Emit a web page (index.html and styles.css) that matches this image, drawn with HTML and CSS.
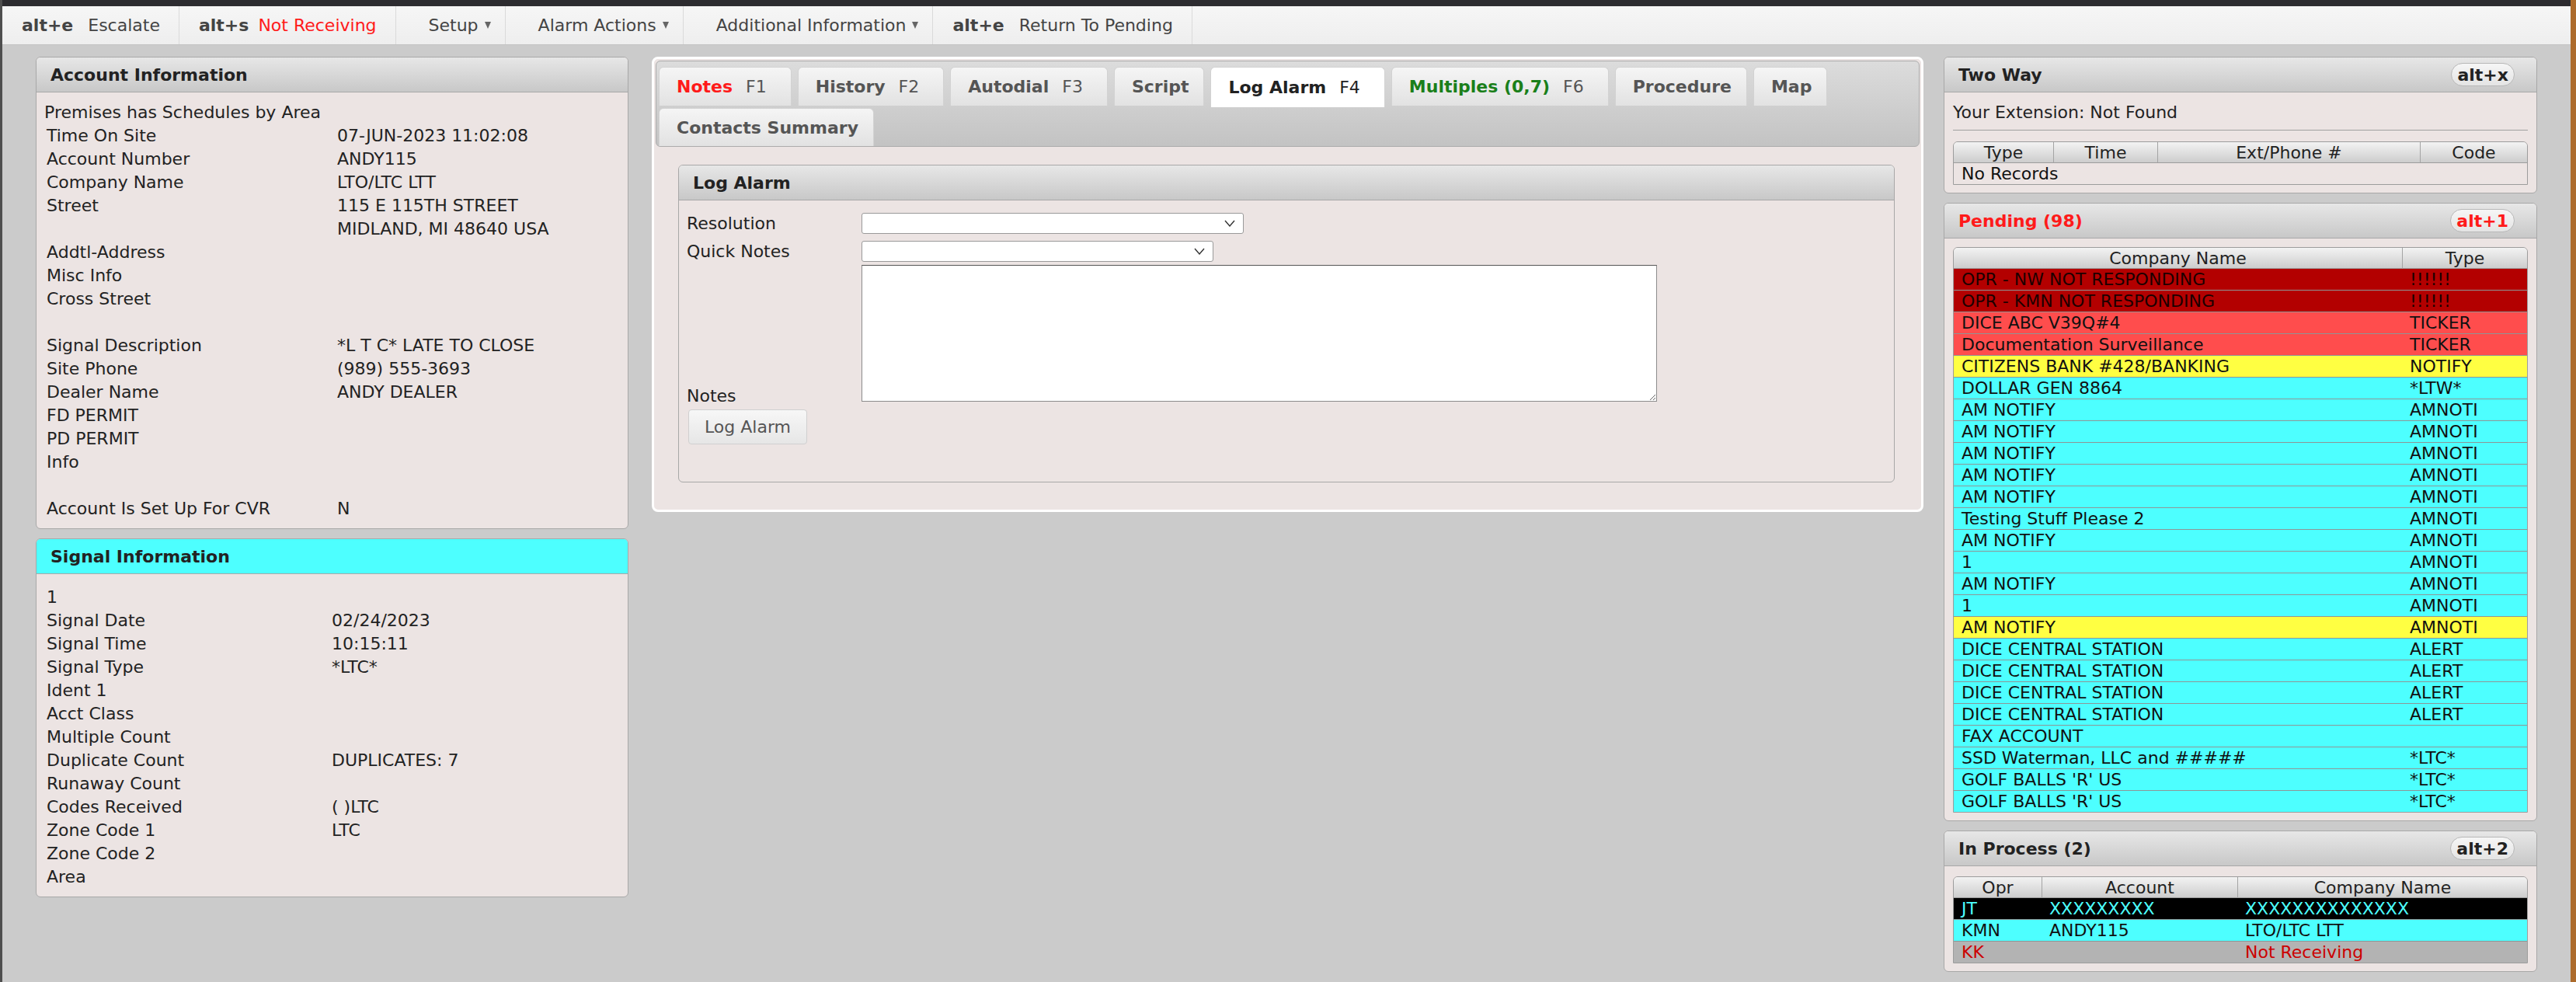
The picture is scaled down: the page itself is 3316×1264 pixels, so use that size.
FILE: index.html
```html
<!DOCTYPE html>
<html lang="en">
<head>
    <meta charset="UTF-8">
    <meta name="viewport" content="width=device-width, initial-scale=1.0">
    <title>Alarm Console</title>
    <link rel="stylesheet" href="styles.css">
</head>
<body>

    <div class="window-bar"></div>

    <div class="toolbar">
        <div class="tool"><b>alt+e</b> Escalate</div>
        <div class="tool"><b>alt+s</b> <span class="red">Not Receiving</span></div>
        <div class="tool menu">Setup<span class="caret"></span></div>
        <div class="tool menu">Alarm Actions<span class="caret"></span></div>
        <div class="tool menu">Additional Information<span class="caret"></span></div>
        <div class="tool"><b>alt+e</b> Return To Pending</div>
    </div>

    <div class="main">

        <!-- left column -->
        <div class="col-left">
            <div class="panel">
                <div class="panel-header">Account Information</div>
                <div class="panel-body">
                    <table class="info account">
                        <tr><td colspan="2" class="premises">Premises has Schedules by Area</td></tr>
                        <tr><td>Time On Site</td><td>07-JUN-2023 11:02:08</td></tr>
                        <tr><td>Account Number</td><td>ANDY115</td></tr>
                        <tr><td>Company Name</td><td>LTO/LTC LTT</td></tr>
                        <tr><td>Street</td><td>115 E 115TH STREET</td></tr>
                        <tr><td></td><td>MIDLAND, MI 48640 USA</td></tr>
                        <tr><td>Addtl-Address</td><td></td></tr>
                        <tr><td>Misc Info</td><td></td></tr>
                        <tr><td>Cross Street</td><td></td></tr>
                        <tr><td></td><td></td></tr>
                        <tr><td>Signal Description</td><td>*L T C* LATE TO CLOSE</td></tr>
                        <tr><td>Site Phone</td><td>(989) 555-3693</td></tr>
                        <tr><td>Dealer Name</td><td>ANDY DEALER</td></tr>
                        <tr><td>FD PERMIT</td><td></td></tr>
                        <tr><td>PD PERMIT</td><td></td></tr>
                        <tr><td>Info</td><td></td></tr>
                        <tr><td></td><td></td></tr>
                        <tr><td>Account Is Set Up For CVR</td><td>N</td></tr>
                    </table>
                </div>
            </div>

            <div class="panel">
                <div class="panel-header cyan">Signal Information</div>
                <div class="panel-body signal-body">
                    <table class="info signal">
                        <tr><td>1</td><td></td></tr>
                        <tr><td>Signal Date</td><td>02/24/2023</td></tr>
                        <tr><td>Signal Time</td><td>10:15:11</td></tr>
                        <tr><td>Signal Type</td><td>*LTC*</td></tr>
                        <tr><td>Ident 1</td><td></td></tr>
                        <tr><td>Acct Class</td><td></td></tr>
                        <tr><td>Multiple Count</td><td></td></tr>
                        <tr><td>Duplicate Count</td><td>DUPLICATES: 7</td></tr>
                        <tr><td>Runaway Count</td><td></td></tr>
                        <tr><td>Codes Received</td><td>( )LTC</td></tr>
                        <tr><td>Zone Code 1</td><td>LTC</td></tr>
                        <tr><td>Zone Code 2</td><td></td></tr>
                        <tr><td>Area</td><td></td></tr>
                    </table>
                </div>
            </div>
        </div>

        <!-- middle column -->
        <div class="col-mid">
            <div class="tabs">
                <ul class="tab-nav">
                    <li><span class="red">Notes</span><span class="fkey">F1</span></li>
                    <li>History<span class="fkey">F2</span></li>
                    <li>Autodial<span class="fkey">F3</span></li>
                    <li>Script</li>
                    <li class="active">Log Alarm<span class="fkey">F4</span></li>
                    <li><span class="green">Multiples (0,7)</span><span class="fkey">F6</span></li>
                    <li>Procedure</li>
                    <li>Map</li>
                    <li class="second">Contacts Summary</li>
                </ul>
                <div class="tab-panel">
                    <div class="panel">
                        <div class="panel-header">Log Alarm</div>
                        <div class="panel-body log-form">
                            <div class="form-row">
                                <label>Resolution</label>
                                <div class="select resolution">
                                    <svg width="14" height="9" viewBox="0 0 14 9"><polyline points="1,1 7,8 13,1" fill="none" stroke="#333" stroke-width="1.4"/></svg>
                                </div>
                            </div>
                            <div class="form-row">
                                <label>Quick Notes</label>
                                <div class="select quick">
                                    <svg width="14" height="9" viewBox="0 0 14 9"><polyline points="1,1 7,8 13,1" fill="none" stroke="#333" stroke-width="1.4"/></svg>
                                </div>
                            </div>
                            <div class="form-row notes-row">
                                <label>Notes</label>
                                <textarea></textarea>
                            </div>
                            <button class="btn">Log Alarm</button>
                        </div>
                    </div>
                </div>
            </div>
        </div>

        <!-- right column -->
        <div class="col-right">
            <div class="panel">
                <div class="panel-header">Two Way <span class="hotkey">alt+x</span></div>
                <div class="panel-body side-body">
                    <div class="extension">Your Extension: Not Found</div>
                    <div class="divider"></div>
                    <div class="grid-wrap">
                        <table class="grid twoway">
                            <tr><th class="c-type">Type</th><th class="c-time">Time</th><th>Ext/Phone #</th><th class="c-code">Code</th></tr>
                            <tr><td colspan="4">No Records</td></tr>
                        </table>
                    </div>
                </div>
            </div>

            <div class="panel">
                <div class="panel-header"><span class="red">Pending (98)</span> <span class="hotkey red">alt+1</span></div>
                <div class="panel-body side-body">
                    <div class="grid-wrap">
                        <table class="grid pending">
                            <tr><th>Company Name</th><th class="c-ptype">Type</th></tr>
                            <tr class="r-dark"><td>OPR - NW NOT RESPONDING</td><td>!!!!!!</td></tr>
                            <tr class="r-dark"><td>OPR - KMN NOT RESPONDING</td><td>!!!!!!</td></tr>
                            <tr class="r-red"><td>DICE ABC V39Q#4</td><td>TICKER</td></tr>
                            <tr class="r-red"><td>Documentation Surveillance</td><td>TICKER</td></tr>
                            <tr class="r-yellow"><td>CITIZENS BANK #428/BANKING</td><td>NOTIFY</td></tr>
                            <tr class="r-cyan"><td>DOLLAR GEN 8864</td><td>*LTW*</td></tr>
                            <tr class="r-cyan"><td>AM NOTIFY</td><td>AMNOTI</td></tr>
                            <tr class="r-cyan"><td>AM NOTIFY</td><td>AMNOTI</td></tr>
                            <tr class="r-cyan"><td>AM NOTIFY</td><td>AMNOTI</td></tr>
                            <tr class="r-cyan"><td>AM NOTIFY</td><td>AMNOTI</td></tr>
                            <tr class="r-cyan"><td>AM NOTIFY</td><td>AMNOTI</td></tr>
                            <tr class="r-cyan"><td>Testing Stuff Please 2</td><td>AMNOTI</td></tr>
                            <tr class="r-cyan"><td>AM NOTIFY</td><td>AMNOTI</td></tr>
                            <tr class="r-cyan"><td>1</td><td>AMNOTI</td></tr>
                            <tr class="r-cyan"><td>AM NOTIFY</td><td>AMNOTI</td></tr>
                            <tr class="r-cyan"><td>1</td><td>AMNOTI</td></tr>
                            <tr class="r-yellow"><td>AM NOTIFY</td><td>AMNOTI</td></tr>
                            <tr class="r-cyan"><td>DICE CENTRAL STATION</td><td>ALERT</td></tr>
                            <tr class="r-cyan"><td>DICE CENTRAL STATION</td><td>ALERT</td></tr>
                            <tr class="r-cyan"><td>DICE CENTRAL STATION</td><td>ALERT</td></tr>
                            <tr class="r-cyan"><td>DICE CENTRAL STATION</td><td>ALERT</td></tr>
                            <tr class="r-cyan"><td>FAX ACCOUNT</td><td></td></tr>
                            <tr class="r-cyan"><td>SSD Waterman, LLC and #####</td><td>*LTC*</td></tr>
                            <tr class="r-cyan"><td>GOLF BALLS 'R' US</td><td>*LTC*</td></tr>
                            <tr class="r-cyan"><td>GOLF BALLS 'R' US</td><td>*LTC*</td></tr>
                        </table>
                    </div>
                </div>
            </div>

            <div class="panel">
                <div class="panel-header">In Process (2) <span class="hotkey">alt+2</span></div>
                <div class="panel-body side-body process-body">
                    <div class="grid-wrap">
                        <table class="grid process">
                            <tr><th class="c-opr">Opr</th><th class="c-acct">Account</th><th>Company Name</th></tr>
                            <tr class="r-black"><td>JT</td><td>XXXXXXXXX</td><td>XXXXXXXXXXXXXX</td></tr>
                            <tr class="r-cyan"><td>KMN</td><td>ANDY115</td><td>LTO/LTC LTT</td></tr>
                            <tr class="r-gray"><td>KK</td><td></td><td>Not Receiving</td></tr>
                        </table>
                    </div>
                </div>
            </div>
        </div>

    </div>

</body>
</html>
```

FILE: styles.css
```css
* {
    margin: 0;
    padding: 0;
    box-sizing: border-box;
}

body {
    font-family: "DejaVu Sans", Verdana, sans-serif;
    font-size: 22px;
    color: #222;
    background: #cbcbcb;
    height: 1264px;
    overflow: hidden;
    border-left: 3px solid #4e4e4e;
    border-right: 7px solid #ad6b2c;
}

.red {
    color: #ff1a1a;
}

.green {
    color: #1a7f1a;
}

.window-bar {
    height: 8px;
    background: #2d2c30;
}

/* top toolbar */
.toolbar {
    display: flex;
    height: 50px;
    background: linear-gradient(#f6f6f6, #eeeeee);
    border-bottom: 1px solid #c3c3c3;
}

.tool {
    display: flex;
    align-items: center;
    padding: 0 24px 0 25px;
    border-right: 1px solid #dadada;
    color: #444;
    white-space: pre;
}

.tool b {
    margin-right: 12px;
}

.tool.menu {
    padding: 0 18px 0 42px;
}

.caret {
    display: inline-block;
    margin-left: 8px;
    border-left: 4px solid transparent;
    border-right: 4px solid transparent;
    border-top: 9px solid #666;
}

/* columns */
.main {
    display: flex;
    align-items: flex-start;
    padding: 15px 0 0 43px;
}

.col-left {
    width: 763px;
    display: flex;
    flex-direction: column;
    gap: 12px;
}

.col-mid {
    width: 1637px;
    margin: 0 26px 0 30px;
}

.col-right {
    width: 764px;
    display: flex;
    flex-direction: column;
    gap: 12px;
}

/* panels */
.panel {
    background: #ece4e3;
    border: 1px solid #a8a8a8;
    border-radius: 6px;
    overflow: hidden;
}

.panel-header {
    height: 45px;
    display: flex;
    align-items: center;
    justify-content: space-between;
    padding: 0 28px 0 18px;
    background: linear-gradient(#e7e7e7, #c8c8c8);
    border-bottom: 1px solid #a8a8a8;
    font-weight: bold;
}

.panel-header.cyan {
    background: #4dffff;
}

.hotkey {
    height: 30px;
    padding: 0 7px;
    display: flex;
    align-items: center;
    border: 1px solid #b8b8b8;
    border-radius: 15px;
    background: linear-gradient(#f6f6f6, #e4e4e4);
}

.panel-body {
    padding: 10px 11px 11px 13px;
}

.signal-body {
    padding-top: 14px;
}

.info {
    border-collapse: collapse;
}

.info td {
    height: 30px;
    padding: 0;
    white-space: nowrap;
}

.account td:first-child {
    width: 374px;
}

.signal td:first-child {
    width: 367px;
}

.info .premises {
    position: relative;
    left: -3px;
}

/* tabs */
.tabs {
    height: 586px;
    background: #ece4e3;
    border: 3px solid #fff;
    border-radius: 8px;
    padding: 2px;
}

.tab-nav {
    list-style: none;
    display: flex;
    flex-wrap: wrap;
    gap: 3px 8px;
    padding: 7px 3px 0;
    background: linear-gradient(#dcdcdc, #c3c3c3);
    border: 1px solid #acacac;
    border-radius: 6px;
}

.tab-nav li {
    height: 50px;
    display: flex;
    align-items: center;
    padding: 0 19px 0 22px;
    background: linear-gradient(#f5f5f5, #e2e2e2);
    border: 1px solid #d2d2d2;
    border-bottom: none;
    border-radius: 6px 6px 0 0;
    font-weight: bold;
    color: #555;
    white-space: nowrap;
}

.tab-nav li.active {
    background: #fff;
    color: #222;
    height: 52px;
    margin-bottom: -2px;
}

.tab-nav li.second {
    height: 49px;
}

.fkey {
    font-weight: normal;
    margin: 0 12px 0 17px;
    color: #555;
}

.tab-nav li.active .fkey {
    color: #222;
}

.tab-panel {
    padding: 23px 32px 0 29px;
}

/* log alarm form */
.log-form {
    height: 362px;
    padding: 16px 10px 0 10px;
}

.form-row {
    display: flex;
    align-items: center;
    margin-bottom: 9px;
}

.form-row label {
    width: 225px;
    flex-shrink: 0;
}

.select {
    height: 27px;
    background: #fff;
    border: 1px solid #9a9a9a;
    border-radius: 3px;
    display: flex;
    align-items: center;
    justify-content: flex-end;
    padding-right: 10px;
}

.select.resolution {
    width: 492px;
}

.select.quick {
    width: 453px;
}

.form-row.notes-row {
    align-items: flex-end;
    margin-top: -5px;
    margin-bottom: 10px;
}

.notes-row label {
    line-height: 30px;
    margin-bottom: -8px;
}

.notes-row textarea {
    width: 1024px;
    height: 176px;
    border: 1px solid #8c8c8c;
    border-top-color: #555;
    background: #fff;
    resize: both;
}

.btn {
    margin-left: 2px;
    width: 153px;
    height: 45px;
    font-family: inherit;
    font-size: 22px;
    color: #555;
    background: linear-gradient(#f7f7f7, #e6e6e6);
    border: 1px solid #d0d0d0;
    border-radius: 4px;
}

/* side tables */
.side-body {
    padding: 11px 11px 10px 11px;
}

.process-body {
    padding-top: 13px;
}

.extension {
    line-height: 30px;
}

.divider {
    height: 1px;
    background: #a0a0a0;
    margin: 7px 0 14px;
}

.grid-wrap {
    border: 1px solid #9c9c9c;
    border-radius: 6px 6px 0 0;
    overflow: hidden;
}

.grid {
    width: 100%;
    border-collapse: separate;
    border-spacing: 0;
    color: #111;
}

.grid th {
    height: 27px;
    font-weight: normal;
    color: #222;
    background: linear-gradient(#f3f3f3, #cdcdcd);
    border-left: 1px solid #a4a4a4;
    border-bottom: 1px solid #9c9c9c;
}

.grid th:first-child {
    border-left: none;
}

.grid td {
    height: 28px;
    padding: 0 10px;
    border-bottom: 1px solid #8e9696;
    white-space: nowrap;
    line-height: 26px;
}

.grid tr:last-child td {
    border-bottom: none;
    height: 27px;
}

.c-type { width: 128px; }
.c-time { width: 134px; }
.c-code { width: 138px; }
.c-ptype { width: 161px; }
.c-opr { width: 113px; }
.c-acct { width: 252px; }

.r-dark { background: #b30000; color: #1c0000; }
.r-red { background: #ff4d4d; }
.r-yellow { background: #ffff42; }
.r-cyan { background: #4dffff; }
.r-black { background: #000; color: #4dffff; }
.r-gray { background: #b3b3b3; color: #cc0000; }
```
